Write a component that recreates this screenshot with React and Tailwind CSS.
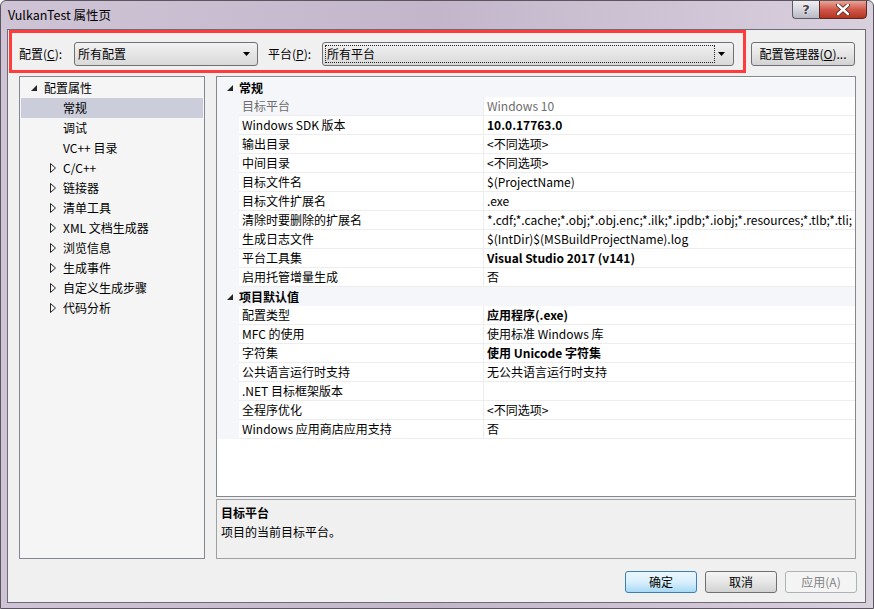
import React from "react";

const FONT = { fontFamily: '"Noto Sans CJK SC", "Liberation Sans", sans-serif' };

function Arrow() {
  return (
    <svg width="7" height="4" viewBox="0 0 7 4" className="block">
      <polygon points="0,0 7,0 3.5,4" fill="#000" />
    </svg>
  );
}

function Expanded() {
  return (
    <svg width="6" height="6" viewBox="0 0 6 6" className="block">
      <polygon points="6,0 6,6 0,6" fill="#262626" />
    </svg>
  );
}

function Collapsed() {
  return (
    <svg width="6" height="10" viewBox="0 0 6 10" className="block">
      <polygon points="0.5,0.5 5.5,5 0.5,9.5" fill="none" stroke="#262626" strokeWidth="1" />
    </svg>
  );
}

const tree = [
  { t: "配置属性", lvl: 0, exp: true },
  { t: "常规", lvl: 1, sel: true },
  { t: "调试", lvl: 1 },
  { t: "VC++ 目录", lvl: 1 },
  { t: "C/C++", lvl: 1, col: true },
  { t: "链接器", lvl: 1, col: true },
  { t: "清单工具", lvl: 1, col: true },
  { t: "XML 文档生成器", lvl: 1, col: true },
  { t: "浏览信息", lvl: 1, col: true },
  { t: "生成事件", lvl: 1, col: true },
  { t: "自定义生成步骤", lvl: 1, col: true },
  { t: "代码分析", lvl: 1, col: true },
];

const grid = [
  { cat: "常规" },
  { n: "目标平台", v: "Windows 10", gray: true },
  { n: "Windows SDK 版本", v: "10.0.17763.0", b: true },
  { n: "输出目录", v: "<不同选项>" },
  { n: "中间目录", v: "<不同选项>" },
  { n: "目标文件名", v: "$(ProjectName)" },
  { n: "目标文件扩展名", v: ".exe" },
  {
    n: "清除时要删除的扩展名",
    v: "*.cdf;*.cache;*.obj;*.obj.enc;*.ilk;*.ipdb;*.iobj;*.resources;*.tlb;*.tli;",
  },
  { n: "生成日志文件", v: "$(IntDir)$(MSBuildProjectName).log" },
  { n: "平台工具集", v: "Visual Studio 2017 (v141)", b: true },
  { n: "启用托管增量生成", v: "否" },
  { cat: "项目默认值" },
  { n: "配置类型", v: "应用程序(.exe)", b: true },
  { n: "MFC 的使用", v: "使用标准 Windows 库" },
  { n: "字符集", v: "使用 Unicode 字符集", b: true },
  { n: "公共语言运行时支持", v: "无公共语言运行时支持" },
  { n: ".NET 目标框架版本", v: "" },
  { n: "全程序优化", v: "<不同选项>" },
  { n: "Windows 应用商店应用支持", v: "否" },
];

export default function App() {
  return (
    <div
      className="w-[874px] h-[609px] relative overflow-hidden text-[12px] text-black rounded-t-[6px] border border-[#5b5560] bg-gradient-to-r from-[#cfc4d6] via-[#c3b6cb] to-[#d9d0de] flex flex-col"
      style={FONT}
    >
      {/* Title bar */}
      <div className="h-[28px] flex items-start shrink-0">
        <div className="pl-[7px] pt-[5px] leading-[17px] text-[12.5px] flex-1">VulkanTest 属性页</div>
        <div className="flex mr-[6px] -mt-px">
          <div className="w-[27px] h-[19px] rounded-bl-[4px] border border-[#5f5a66] border-r-0 bg-gradient-to-b from-[#eeeef2] via-[#d6d6de] to-[#b9b9c4] flex items-center justify-center">
            <span
              className="font-bold text-[13px] leading-none text-[#46464e]"
              style={{ textShadow: "0 0 1px #fff, 0 0 2px #fff", fontFamily: '"DejaVu Sans", sans-serif' }}
            >
              ?
            </span>
          </div>
          <div className="w-[48px] h-[19px] rounded-br-[4px] border border-[#5a2a22] bg-gradient-to-b from-[#e9a597] via-[#d0574a] to-[#b4331f] flex items-center justify-center">
            <svg width="14" height="11" viewBox="0 0 14 11">
              <path d="M2 1 L12 10 M12 1 L2 10" stroke="#4a1e18" strokeWidth="4" strokeLinecap="round" />
              <path d="M2 1 L12 10 M12 1 L2 10" stroke="#ffffff" strokeWidth="2.4" strokeLinecap="round" />
            </svg>
          </div>
        </div>
      </div>

      {/* Client area */}
      <div className="ml-[6px] mr-[7px] h-[574px] border border-[#6f6a74] bg-[#f0f0f0] flex flex-col">
        {/* Config row */}
        <div className="h-[46px] flex items-start shrink-0">
          <div className="ml-px w-[737px] h-[43px] border-[3px] border-[#ff3b3b]">
            <div className="mt-[9px] h-[24px] flex items-center pl-[7px]">
              <span className="w-[55px] leading-[16px]">
                配置(<span className="underline">C</span>):
              </span>
              <div className="w-[184px] h-[24px] rounded-[3px] border border-[#707070] bg-gradient-to-b from-[#f2f2f2] to-[#d9d9d9] flex items-center pl-[3px] pr-[7px]">
                <span className="flex-1 leading-[16px]">所有配置</span>
                <Arrow />
              </div>
              <span className="ml-[10px] w-[54px] leading-[16px]">
                平台(<span className="underline">P</span>):
              </span>
              <div className="w-[412px] h-[24px] rounded-[3px] border border-[#707070] bg-gradient-to-b from-[#f2f2f2] to-[#d9d9d9] flex items-center pl-[2px] pr-[8px]">
                <div className="w-[390px] h-[18px] border border-dotted border-[#222] flex items-center pl-[1px] leading-[16px]">
                  所有平台
                </div>
                <div className="flex-1" />
                <Arrow />
              </div>
            </div>
          </div>
          <div className="ml-[5px] mt-[12px] w-[104px] h-[24px] rounded-[3px] border border-[#707070] bg-gradient-to-b from-[#f4f4f4] via-[#e6e6e6] to-[#d2d2d2] flex items-center justify-center leading-[16px]">
            配置管理器(<span className="underline">O</span>)...
          </div>
        </div>

        {/* Main area */}
        <div className="flex h-[483px] shrink-0">
          {/* Tree */}
          <div className="ml-[11px] w-[186px] h-[483px] border border-[#828790] bg-[#f5f5f5] pt-px px-px">
            {tree.map((it, i) => (
              <div
                key={i}
                className={`h-[20px] flex items-center ${it.sel ? "bg-[#cbcdda]" : ""}`}
              >
                {it.lvl === 0 ? (
                  <>
                    <div className="w-[23px] flex justify-end pr-[7px]">
                      <Expanded />
                    </div>
                    <span className="leading-[16px]">{it.t}</span>
                  </>
                ) : (
                  <>
                    <div className="w-[42px] flex justify-end pr-[7px]">
                      {it.col ? <Collapsed /> : null}
                    </div>
                    <span className="leading-[16px]">{it.t}</span>
                  </>
                )}
              </div>
            ))}
          </div>

          {/* Right column */}
          <div className="ml-[11px] w-[640px] flex flex-col">
            <div className="h-[421px] border border-[#828790] bg-white pt-px overflow-hidden">
              {grid.map((r, i) =>
                r.cat ? (
                  <div key={i} className="h-[19px] flex items-center bg-[#f4f6fa]">
                    <div className="w-[22px] flex justify-end pr-[6px]">
                      <Expanded />
                    </div>
                    <span className="font-bold leading-[16px]">{r.cat}</span>
                  </div>
                ) : (
                  <div key={i} className="h-[19px] flex">
                    <div className="w-[22px] shrink-0 bg-[#f4f6fa]" />
                    <div
                      className={`w-[244px] shrink-0 border-b border-[#ededed] pl-[3px] flex items-center leading-[16px] whitespace-nowrap ${
                        r.gray ? "bg-[#f4f6fa] text-[#6d6d6d]" : ""
                      }`}
                    >
                      {r.n}
                    </div>
                    <div className="w-px shrink-0 bg-[#ededed]" />
                    <div
                      className={`flex-1 min-w-0 overflow-hidden border-b border-[#ededed] pl-[3px] flex items-center leading-[16px] whitespace-nowrap ${
                        r.b ? "font-bold" : ""
                      } ${r.gray ? "text-[#6d6d6d]" : ""}`}
                    >
                      {r.v}
                    </div>
                  </div>
                )
              )}
            </div>
            <div className="mt-[2px] h-[60px] border border-[#a0a0a0] bg-[#f0f0f0] pl-[4px] pt-[3px]">
              <div className="font-bold leading-[19px]">目标平台</div>
              <div className="leading-[19px]">项目的当前目标平台。</div>
            </div>
          </div>
        </div>

        {/* Buttons */}
        <div className="mt-[12px] flex justify-end pr-[8px] gap-[8px]">
          <div className="w-[72px] h-[22px] rounded-[3px] border border-[#3c7fb1] bg-gradient-to-b from-[#eaf6fd] via-[#d9f0fc] to-[#a7d9f5] flex items-center justify-center leading-[16px]">
            确定
          </div>
          <div className="w-[72px] h-[22px] rounded-[3px] border border-[#707070] bg-gradient-to-b from-[#f4f4f4] via-[#e6e6e6] to-[#d2d2d2] flex items-center justify-center leading-[16px]">
            取消
          </div>
          <div className="w-[72px] h-[22px] rounded-[3px] border border-[#adb2b5] bg-[#f4f4f4] text-[#838383] flex items-center justify-center leading-[16px]">
            应用(A)
          </div>
        </div>
      </div>
    </div>
  );
}
